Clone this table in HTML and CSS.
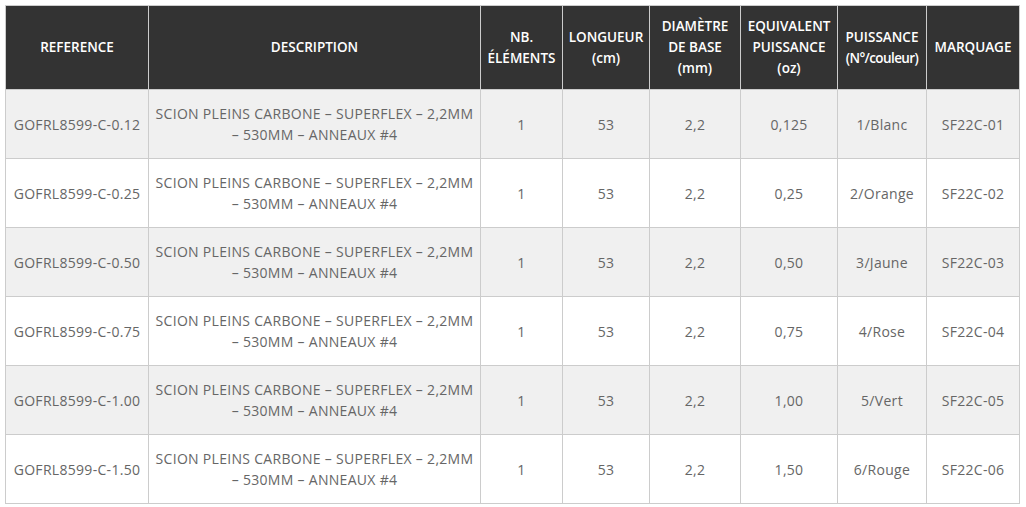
FILE: index.html
```html
<!DOCTYPE html>
<html lang="fr">
<head>
<meta charset="utf-8">
<link rel="stylesheet" href="styles.css">
</head>
<body>
<table class="spec">
  <colgroup>
    <col class="c1"><col class="c2"><col class="c3"><col class="c4"><col class="c5"><col class="c6"><col class="c7"><col class="c8">
  </colgroup>
  <thead>
    <tr>
      <th>REFERENCE</th>
      <th>DESCRIPTION</th>
      <th>NB.<br>ÉLÉMENTS</th>
      <th>LONGUEUR<br>(cm)</th>
      <th>DIAMÈTRE<br>DE BASE<br>(mm)</th>
      <th>EQUIVALENT<br>PUISSANCE<br>(oz)</th>
      <th>PUISSANCE<br><span class="small">(N°/couleur)</span></th>
      <th>MARQUAGE</th>
    </tr>
  </thead>
  <tbody>
    <tr><td class="ref">GOFRL8599-C-0.12</td><td>SCION PLEINS CARBONE – SUPERFLEX – 2,2MM – 530MM – ANNEAUX #4</td><td>1</td><td>53</td><td>2,2</td><td>0,125</td><td>1/Blanc</td><td>SF22C-01</td></tr>
    <tr><td class="ref">GOFRL8599-C-0.25</td><td>SCION PLEINS CARBONE – SUPERFLEX – 2,2MM – 530MM – ANNEAUX #4</td><td>1</td><td>53</td><td>2,2</td><td>0,25</td><td>2/Orange</td><td>SF22C-02</td></tr>
    <tr><td class="ref">GOFRL8599-C-0.50</td><td>SCION PLEINS CARBONE – SUPERFLEX – 2,2MM – 530MM – ANNEAUX #4</td><td>1</td><td>53</td><td>2,2</td><td>0,50</td><td>3/Jaune</td><td>SF22C-03</td></tr>
    <tr><td class="ref">GOFRL8599-C-0.75</td><td>SCION PLEINS CARBONE – SUPERFLEX – 2,2MM – 530MM – ANNEAUX #4</td><td>1</td><td>53</td><td>2,2</td><td>0,75</td><td>4/Rose</td><td>SF22C-04</td></tr>
    <tr><td class="ref">GOFRL8599-C-1.00</td><td>SCION PLEINS CARBONE – SUPERFLEX – 2,2MM – 530MM – ANNEAUX #4</td><td>1</td><td>53</td><td>2,2</td><td>1,00</td><td>5/Vert</td><td>SF22C-05</td></tr>
    <tr><td class="ref">GOFRL8599-C-1.50</td><td>SCION PLEINS CARBONE – SUPERFLEX – 2,2MM – 530MM – ANNEAUX #4</td><td>1</td><td>53</td><td>2,2</td><td>1,50</td><td>6/Rouge</td><td>SF22C-06</td></tr>
  </tbody>
</table>
</body>
</html>
```

FILE: styles.css
```css
html, body {
  margin: 0;
  background: #ffffff;
}
body {
  padding: 5px;
  font-family: "Open Sans", "Noto Sans", sans-serif;
}
.spec {
  border-collapse: collapse;
  table-layout: fixed;
  width: 1015px;
}
.c1 { width: 143px; }
.c2 { width: 332px; }
.c3 { width: 82px; }
.c4 { width: 87px; }
.c5 { width: 91px; }
.c6 { width: 97px; }
.c7 { width: 89px; }
.c8 { width: 93px; }
.spec th, .spec td {
  border: 1px solid #cccccc;
  text-align: center;
  vertical-align: middle;
}
.spec th {
  background: #333333;
  color: #ffffff;
  font-size: 13.5px;
  font-weight: 600;
  line-height: 21px;
  height: 83px;
  padding: 0 1px;
}
.spec th .small {
  letter-spacing: -0.6px;
}
.spec td {
  color: #666666;
  font-size: 14px;
  letter-spacing: 0.3px;
  line-height: 21px;
  height: 68px;
  padding: 0 4px;
}
.spec td.ref {
  white-space: nowrap;
}
.spec tbody tr:nth-child(odd) td {
  background: #f0f0f0;
}
```
